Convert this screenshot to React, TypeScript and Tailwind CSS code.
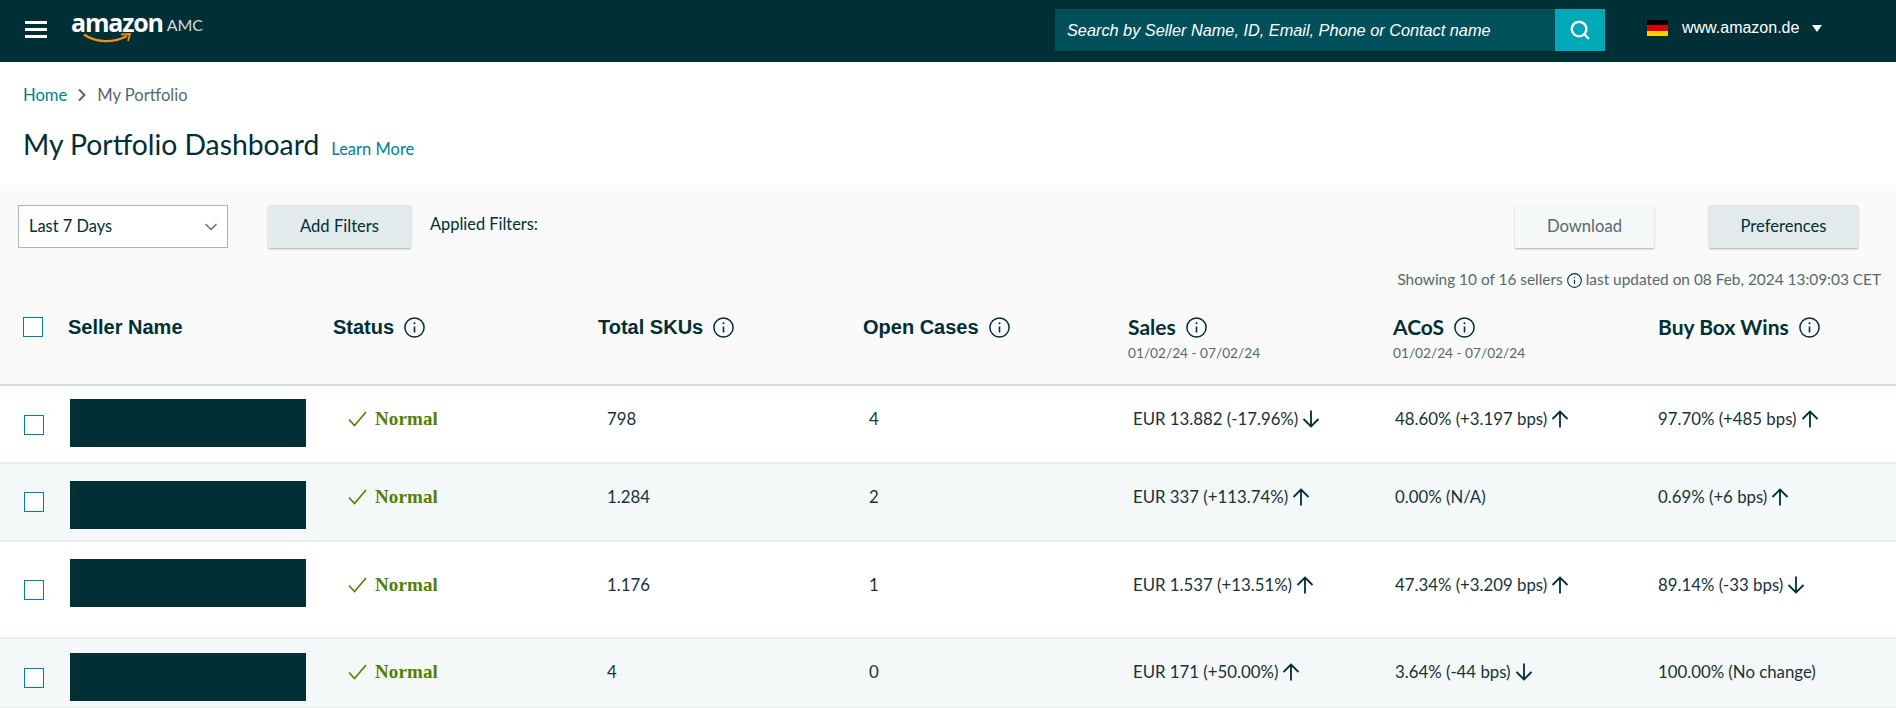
import { ChevronDown, ChevronRight, Search } from "lucide-react";

const ember = "font-['Lato','Noto_Sans',sans-serif]";

const InfoIcon = ({ size = 21 }: { size?: number }) => (
  <svg width={size} height={size} viewBox="0 0 21 21" fill="none" stroke="#002f36" strokeWidth="1.5" className="shrink-0">
    <circle cx="10.5" cy="10.5" r="9.6" />
    <path d="M10.5 9.5v6" strokeWidth="1.6" />
    <circle cx="10.5" cy="6.3" r="1" fill="#002f36" stroke="none" />
  </svg>
);

const Arrow = ({ dir }: { dir: "up" | "down" }) => (
  <svg width="18" height="18" viewBox="0 0 18 18" fill="none" stroke="#002f36" strokeWidth="1.8" className={dir === "down" ? "ml-1 rotate-180" : "ml-1"}>
    <path d="M9 17.5V1.5M1.5 9 9 1.5 16.5 9" />
  </svg>
);

const CheckBox = ({ className = "" }: { className?: string }) => (
  <div className={`w-5 h-5 bg-white border border-[#008296] shrink-0 ${className}`} />
);

const HeaderCell = ({ title, date, font, className = "" }: { title: string; date?: boolean; font: string; className?: string }) => (
  <div className={`w-[265px] shrink-0 ${className}`}>
    <div className="flex items-center gap-2.5 h-6">
      <span className={`${font} font-bold text-[#002f36]`}>{title}</span>
      <InfoIcon />
    </div>
    {date && <div className="text-[13.7px] text-[#56696c] mt-1 leading-5">01/02/24 - 07/02/24</div>}
  </div>
);

type Row = {
  sku: string;
  cases: string;
  sales: string;
  salesDir?: "up" | "down";
  acos: string;
  acosDir?: "up" | "down";
  wins: string;
  winsDir?: "up" | "down";
  rowClass: string;
  boxClass: string;
  textClass: string;
};

const rows: Row[] = [
  { sku: "798", cases: "4", sales: "EUR 13.882 (-17.96%)", salesDir: "down", acos: "48.60% (+3.197 bps)", acosDir: "up", wins: "97.70% (+485 bps)", winsDir: "up", rowClass: "h-[78px] pt-[13px] bg-white", boxClass: "mt-[16px]", textClass: "mt-[8px]" },
  { sku: "1.284", cases: "2", sales: "EUR 337 (+113.74%)", salesDir: "up", acos: "0.00% (N/A)", wins: "0.69% (+6 bps)", winsDir: "up", rowClass: "h-[78px] pt-[17px] bg-[#f5f8f9]", boxClass: "mt-[11px]", textClass: "mt-[4px]" },
  { sku: "1.176", cases: "1", sales: "EUR 1.537 (+13.51%)", salesDir: "up", acos: "47.34% (+3.209 bps)", acosDir: "up", wins: "89.14% (-33 bps)", winsDir: "down", rowClass: "h-[97px] pt-[17px] bg-white", boxClass: "mt-[21px]", textClass: "mt-[14px]" },
  { sku: "4", cases: "0", sales: "EUR 171 (+50.00%)", salesDir: "up", acos: "3.64% (-44 bps)", acosDir: "down", wins: "100.00% (No change)", rowClass: "h-[70px] pt-[14px] bg-[#f5f8f9]", boxClass: "mt-[15px]", textClass: "mt-[7px]" },
];

const Value = ({ text, dir, className }: { text: string; dir?: "up" | "down"; className: string }) => (
  <div className={`shrink-0 flex items-center h-6 text-[16.8px] text-[#16333a] ${className}`}>
    <span>{text}</span>
    {dir && <Arrow dir={dir} />}
  </div>
);

const arial = "font-['Liberation_Sans',sans-serif] text-[20px]";
const lato = "text-[21px]";

export default function App() {
  return (
    <div className={`${ember} w-full h-[708px] overflow-hidden bg-white`}>
      {/* top bar */}
      <header className="h-[62px] bg-[#002f36] flex items-start">
        <div className="ml-[25px] mt-[21px] w-[22px] h-[17px] flex flex-col justify-between">
          <div className="h-[3px] bg-white" />
          <div className="h-[3px] bg-white" />
          <div className="h-[3px] bg-white" />
        </div>
        <div className="ml-6 mt-[7px] relative w-[135px] h-[40px] flex items-start text-white">
          <span className="font-['Open_Sans',sans-serif] font-bold text-[25px] leading-[30px] tracking-[-1.2px]">amazon</span>
          <span className="ml-[4px] mt-[8px] font-['Lato',sans-serif] text-[16px] leading-5 text-[#d5dbdb]">AMC</span>
          <svg width="50" height="12" viewBox="0 0 50 12" fill="none" className="absolute left-[12px] top-[26px]">
            <path d="M1 1.5C12 9.5 30 10.5 44 3" stroke="#f08f1c" strokeWidth="2.2" />
            <path d="M38 1.5 47 1 45 8" stroke="#f08f1c" strokeWidth="1.8" />
          </svg>
        </div>
        <div className="ml-[849px] mt-[9px] flex h-[42px]">
          <div className="w-[500px] bg-[#00505c] pl-3 flex items-center font-['Liberation_Sans',sans-serif] italic text-[16.3px] text-white">
            Search by Seller Name, ID, Email, Phone or Contact name
          </div>
          <div className="w-[50px] bg-[#00a8b8] flex items-center justify-center">
            <Search size={22} color="#fff" strokeWidth={2.6} />
          </div>
        </div>
        <div className="ml-[42px] mt-[20px] w-[21px] h-4 flex flex-col shrink-0">
          <div className="flex-1 bg-black" />
          <div className="flex-1 bg-[#dd0000]" />
          <div className="flex-1 bg-[#ffce00]" />
        </div>
        <span className="ml-[14px] mt-4 font-['Liberation_Sans',sans-serif] text-[16px] leading-6 text-white">www.amazon.de</span>
        <div className="ml-[13px] mt-[25px] w-0 h-0 border-x-[5px] border-x-transparent border-t-[7px] border-t-white" />
      </header>

      {/* breadcrumb and title */}
      <div className="h-[123px] pl-[23px] pt-[21px]">
        <div className="flex items-center h-6 text-[16.6px]">
          <span className="text-[#008296]">Home</span>
          <ChevronRight size={20} color="#56696c" strokeWidth={2.4} className="mx-[5px]" />
          <span className="text-[#56696c]">My Portfolio</span>
        </div>
        <div className="flex items-baseline mt-[19px]">
          <h1 className="text-[28.3px] leading-9 text-[#002f36]">My Portfolio Dashboard</h1>
          <a className="ml-3 text-[16.5px] text-[#008296]">Learn More</a>
        </div>
      </div>

      {/* toolbar */}
      <div className="bg-[#fafafa] h-[201px] border-b-2 border-[#d5dbdb]">
        <div className="flex pt-5 pl-[18px] pr-[38px] h-[85px]">
          <div className="w-[210px] h-[43px] bg-white border border-[#aab7b8] flex items-center justify-between pl-[10px] pr-[6px] text-[16.4px] text-[#002f36]">
            Last 7 Days
            <ChevronDown size={20} color="#6c7778" />
          </div>
          <button className="ml-10 w-[143px] h-[43px] bg-[#e3eaec] rounded-[1px] shadow-[0_1px_2px_rgba(0,0,0,0.3)] text-[16.6px] text-[#002f36]">Add Filters</button>
          <span className="ml-[19px] mt-[7px] text-[16.4px] leading-6 text-[#002f36]">Applied Filters:</span>
          <button className="ml-auto w-[139px] h-[43px] bg-[#f5f8f9] rounded-[1px] shadow-[0_1px_2px_rgba(0,0,0,0.3)] text-[16.6px] text-[#56696c]">Download</button>
          <button className="ml-[55px] w-[149px] h-[43px] bg-[#e3eaec] rounded-[1px] shadow-[0_1px_2px_rgba(0,0,0,0.3)] text-[16.6px] text-[#002f36]">Preferences</button>
        </div>
        <div className="flex justify-end items-center gap-1 pr-[15px] h-5 text-[15.4px] text-[#56696c]">
          <span>Showing 10 of 16 sellers</span>
          <InfoIcon size={15} />
          <span>last updated on 08 Feb, 2024 13:09:03 CET</span>
        </div>
        <div className="flex items-start pl-[23px] mt-[25px]">
          <CheckBox className="mt-[2px]" />
          <div className="w-[25px] shrink-0" />
          <div className={`${arial} w-[265px] shrink-0 h-6 flex items-center font-bold text-[#002f36]`}>Seller Name</div>
          <HeaderCell title="Status" font={arial} />
          <HeaderCell title="Total SKUs" font={arial} />
          <HeaderCell title="Open Cases" font={arial} className="w-[264px]" />
          <HeaderCell title="Sales" date font={lato} />
          <HeaderCell title="ACoS" date font={lato} />
          <HeaderCell title="Buy Box Wins" font={lato} />
        </div>
      </div>

      {/* rows */}
      {rows.map((r, i) => (
        <div key={i} className={`${r.rowClass} flex items-start pl-6 border-b-2 border-[#eaeded]`}>
          <CheckBox className={r.boxClass} />
          <div className="ml-[26px] w-[236px] h-12 bg-[#002f36] shrink-0" />
          <div className={`w-[301px] shrink-0 pl-[42px] flex items-center h-6 ${r.textClass}`}>
            <svg width="19" height="16" viewBox="0 0 19 16" fill="none" stroke="#538000" strokeWidth="1.6">
              <path d="M1 8.5 6.5 14.5 18 1" />
            </svg>
            <span className="ml-[8px] font-['Liberation_Serif',serif] font-bold text-[19px] tracking-[0.1px] text-[#538000]">Normal</span>
          </div>
          <Value text={r.sku} className={`w-[262px] ${r.textClass}`} />
          <Value text={r.cases} className={`w-[264px] ${r.textClass}`} />
          <Value text={r.sales} dir={r.salesDir} className={`w-[262px] ${r.textClass}`} />
          <Value text={r.acos} dir={r.acosDir} className={`w-[263px] ${r.textClass}`} />
          <Value text={r.wins} dir={r.winsDir} className={`w-[230px] ${r.textClass}`} />
        </div>
      ))}
    </div>
  );
}
